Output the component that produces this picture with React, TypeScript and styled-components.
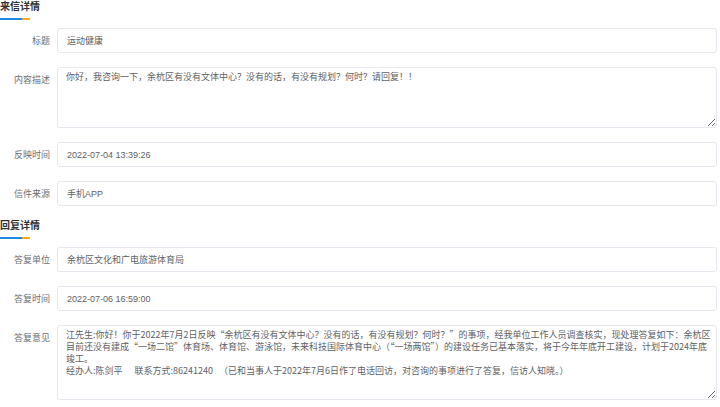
import styled, { createGlobalStyle } from 'styled-components';

// --- Global ---
const GlobalStyle = createGlobalStyle`
  html, body {
    margin: 0;
    padding: 0;
    background: #fff;
  }
  body {
    font-family: 'Liberation Sans', 'Noto Sans CJK SC', sans-serif;
  }
`;

const FONT = `'Liberation Sans', 'Noto Sans CJK SC', sans-serif`;
// CJK first so quotes and punctuation get full width, like the original
const CJK_FONT = `'Noto Sans CJK SC', 'Liberation Sans', sans-serif`;

// --- Layout ---
const Page = styled.div`
  width: 720px;
  padding: 0 3px 0 0;
  box-sizing: border-box;
`;

const Section = styled.section<{ $first?: boolean }>`
  margin-top: ${(p) => (p.$first ? '0' : '13px')};
`;

const SectionTitle = styled.h2`
  margin: 0;
  font-family: ${FONT};
  font-size: 10px;
  font-weight: bold;
  line-height: 14px;
  color: #303133;
`;

// blue bar with a short orange tail
const TitleBar = styled.div`
  width: 30px;
  height: 2px;
  margin-top: 4px;
  background: linear-gradient(90deg, #1e88e5 0, #1e88e5 22px, #f5a623 22px, #f5a623 30px);
`;

const Fields = styled.div`
  display: flex;
  flex-direction: column;
  gap: 14px;
  margin-top: 8px;
`;

const Row = styled.div<{ $top?: boolean }>`
  display: grid;
  grid-template-columns: 50px 1fr;
  column-gap: 7px;
  align-items: ${(p) => (p.$top ? 'start' : 'center')};
`;

const Label = styled.label<{ $top?: boolean }>`
  font-family: ${FONT};
  font-size: 9px;
  color: #6b6e73;
  text-align: right;
  padding-top: ${(p) => (p.$top ? '6px' : '0')};
  white-space: nowrap;
`;

const fieldBase = `
  width: 100%;
  box-sizing: border-box;
  border: 1px solid #e4e7ed;
  border-radius: 3px;
  background: #fff;
  color: #606266;
  font-size: 9px;
  outline: none;
`;

const Input = styled.input`
  ${fieldBase}
  font-family: ${FONT};
  height: 25px;
  padding: 0 9px;
`;

const TextArea = styled.textarea<{ $h: number }>`
  ${fieldBase}
  font-family: ${CJK_FONT};
  height: ${(p) => p.$h}px;
  padding: 3px 2px 3px 8px;
  line-height: 12px;
  resize: vertical;
  display: block;
`;

const replyText =
  '江先生:你好！你于2022年7月2日反映“余杭区有没有文体中心？没有的话，有没有规划？何时？”的事项，经我单位工作人员调查核实，现处理答复如下：余杭区目前还没有建成“一场二馆”体育场、体育馆、游泳馆，未来科技国际体育中心（“一场两馆”）的建设任务已基本落实，将于今年年底开工建设，计划于2024年底竣工。\n经办人:陈剑平      联系方式:86241240   （已和当事人于2022年7月6日作了电话回访，对咨询的事项进行了答复，信访人知晓。）';

export default function App() {
  return (
    <>
      <GlobalStyle />
      <Page>
        <Section $first>
          <SectionTitle>来信详情</SectionTitle>
          <TitleBar />
          <Fields>
            <Row>
              <Label>标题</Label>
              <Input readOnly value="运动健康" />
            </Row>
            <Row $top>
              <Label $top>内容描述</Label>
              <TextArea
                $h={61}
                readOnly
                value="你好，我咨询一下，余杭区有没有文体中心？没有的话，有没有规划？何时？请回复！！"
              />
            </Row>
            <Row>
              <Label>反映时间</Label>
              <Input readOnly value="2022-07-04 13:39:26" />
            </Row>
            <Row>
              <Label>信件来源</Label>
              <Input readOnly value="手机APP" />
            </Row>
          </Fields>
        </Section>

        <Section>
          <SectionTitle>回复详情</SectionTitle>
          <TitleBar />
          <Fields>
            <Row>
              <Label>答复单位</Label>
              <Input readOnly value="余杭区文化和广电旅游体育局" />
            </Row>
            <Row>
              <Label>答复时间</Label>
              <Input readOnly value="2022-07-06 16:59:00" />
            </Row>
            <Row $top>
              <Label $top>答复意见</Label>
              <TextArea $h={75} readOnly value={replyText} />
            </Row>
          </Fields>
        </Section>
      </Page>
    </>
  );
}
